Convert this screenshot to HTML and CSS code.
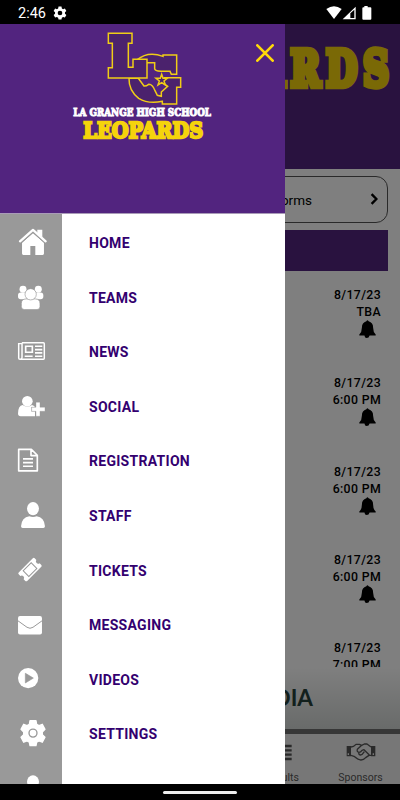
FILE: index.html
```html
<!DOCTYPE html>
<html lang="en">

<head>
    <meta charset="UTF-8">
    <meta name="viewport" content="width=device-width, initial-scale=1.0">
    <link rel="stylesheet" href="styles.css">
    <title>La Grange Leopards</title>
</head>

<body>

    <div class="status-bar">
        <span class="clock">2:46</span>
        <svg class="status-gear" viewBox="0 0 24 24"><path fill="#fff" fill-rule="evenodd" d="M9.500 1h5l.7 3.200 2.100 1.200 3.100-1 2.500 4.300-2.400 2.200v2.400l2.400 2.200-2.500 4.300-3.100-1-2.100 1.200-.7 3.200h-5l-.7-3.200-2.100-1.200-3.100 1-2.500-4.300 2.400-2.200v-2.400L1.100 8.700l2.500-4.300 3.100 1 2.100-1.200zM12 8a4 4 0 1 0 0 8 4 4 0 0 0 0-8z"/></svg>
        <svg class="status-icons" viewBox="0 0 138 42">
            <path fill="#fff" d="M1 9Q24-7 47 9L24 39z"/>
            <path fill="#fff" fill-rule="evenodd" d="M50 40L89 2V40zM73 22V36H85V11z"/>
            <path fill="#fff" d="M115 0h10v4h8q3 0 3 3v31q0 3-3 3h-21q-3 0-3-3V7q0-3 3-3h3z"/>
        </svg>
    </div>

    <div class="screen">
        <div class="app">
            <header class="banner">
                <svg viewBox="0 0 400 145">
                    <text class="slab" transform="translate(394.500 61.800) scale(.75 1)" text-anchor="end" font-size="48" letter-spacing="7.500" stroke-width="6.500">LEOPARDS</text>
                </svg>
            </header>
            <div class="forms-button">
                <span>Forms</span>
                <svg viewBox="0 0 20 30"><path d="M4 3l12 12L4 27" fill="none" stroke="#000" stroke-width="6"/></svg>
            </div>
            <div class="section-bar"></div>
            <div class="events">
                <div class="event"><span>8/17/23</span><span>TBA</span><svg class="bell" viewBox="0 0 51 56"><path d="M22 4q3-7 7 0 14 4 14 20 0 14 8 21v3H32q-2 8-9 8-6 0-7-8H0v-3q8-7 8-21 0-16 14-20z"/></svg></div>
                <div class="event"><span>8/17/23</span><span>6:00 PM</span><svg class="bell" viewBox="0 0 51 56"><path d="M22 4q3-7 7 0 14 4 14 20 0 14 8 21v3H32q-2 8-9 8-6 0-7-8H0v-3q8-7 8-21 0-16 14-20z"/></svg></div>
                <div class="event"><span>8/17/23</span><span>6:00 PM</span><svg class="bell" viewBox="0 0 51 56"><path d="M22 4q3-7 7 0 14 4 14 20 0 14 8 21v3H32q-2 8-9 8-6 0-7-8H0v-3q8-7 8-21 0-16 14-20z"/></svg></div>
                <div class="event"><span>8/17/23</span><span>6:00 PM</span><svg class="bell" viewBox="0 0 51 56"><path d="M22 4q3-7 7 0 14 4 14 20 0 14 8 21v3H32q-2 8-9 8-6 0-7-8H0v-3q8-7 8-21 0-16 14-20z"/></svg></div>
                <div class="event"><span>8/17/23</span><span>7:00 PM</span></div>
            </div>
            <div class="sponsor">MEDIA</div>
            <div class="tabs">
                <div class="tab results">
                    <svg viewBox="0 0 90 54"><path d="M20 9h54M20 22h54M20 35h54M20 48h54" stroke="#555" stroke-width="7"/></svg>
                    <span>Results</span>
                </div>
                <div class="tab">
                    <svg viewBox="0 0 90 54">
                        <path fill="#555" fill-rule="evenodd" d="M2 9h13v31H2zM5 31v5h4v-5zM75 9h13v31H75zM80 31v5h4v-5z"/>
                        <path fill="none" stroke="#555" stroke-width="4" stroke-linejoin="round" d="M15 12q8 0 15-8h10l7 3 8-4h8l12 9M15 37l9 3q15 12 21 11 8 0 14-7l10-7h6M47 7L34 19q-2 8 5 9 5 0 9-6l6-2 16 16M39 28q-2 7 4 8 6 0 12-10"/>
                    </svg>
                    <span>Sponsors</span>
                </div>
            </div>
        </div>

        <div class="scrim"></div>

        <nav class="drawer">
            <div class="drawer-header">
                <svg class="logo" viewBox="0 0 510 390">
                    <g fill="#4b226d" stroke="#f0cd16" stroke-width="4.500">
                        <path d="M232 107Q264 80 309 97V93H350V151H334L330 142H303Q284 140 284 134V116H232z"/>
                        <path d="M207 163Q206 200 236 223Q265 241 307 232V240H350V190H362V161H313L311 178L323 187L304 204V217L292 214L285 200Q277 180 266 181Q258 187 252 186L235 163z"/>
                        <path d="M145 28h71v30h-11v72h14v-24h42v56H145v-31h12V58h-12z"/>
                        <path d="M305 151l4 12h13l-10 8 4 12-11-7-11 7 4-12-10-8h13z"/>
                    </g>
                    <text class="school" x="40" y="277" font-size="31" textLength="413" lengthAdjust="spacingAndGlyphs">LA GRANGE HIGH SCHOOL</text>
                    <text class="slab" x="70" y="343" font-size="66" stroke-width="7" textLength="360" lengthAdjust="spacingAndGlyphs">LEOPARDS</text>
                </svg>
                <svg class="close" viewBox="0 0 54 54"><path d="M4 4l46 46M50 4L4 50" stroke="#ffd90a" stroke-width="8" stroke-linecap="round"/></svg>
            </div>
            <div class="menu">
                <div class="menu-item">
                    <svg class="icon" viewBox="0 0 186 164"><path fill="#fff" d="M66 80l33-29 33 29v33q0 4-4 4h-22V90H91v27H70q-4 0-4-4zM112 41h15v24l-15-12z"/><path fill="none" stroke="#999" stroke-width="3" d="M62 83l37-33 37 33"/><path fill="none" stroke="#fff" stroke-width="7" stroke-linecap="round" stroke-linejoin="round" d="M60 76l39-34 38 34"/></svg>
                    <a>HOME</a>
                </div>
                <div class="menu-item">
                    <svg class="icon" viewBox="0 0 186 164">
                        <g fill="#fff">
                            <circle cx="69" cy="55" r="10.500"/><circle cx="115" cy="55" r="10.500"/>
                            <rect x="54" y="65" width="28" height="20" rx="8"/><rect x="102" y="65" width="28" height="20" rx="8"/>
                        </g>
                        <g fill="#fff" stroke="#999" stroke-width="2"><path d="M64 107V98q0-14 14-14h28q14 0 14 14v9q0 9-9 9H73q-9 0-9-9z"/><circle cx="92" cy="70" r="17"/></g>
                    </svg>
                    <a>TEAMS</a>
                </div>
                <div class="menu-item">
                    <svg class="icon" viewBox="0 0 186 164">
                        <path fill="none" stroke="#fff" stroke-width="4.500" d="M66 53h64q3 0 3 3v44q0 3-3 3H60q-4 0-4-4V56h10v41q0 5-4 5M66 53v45"/>
                        <path fill="none" stroke="#fff" stroke-width="5" d="M77 64h20v18H77zM105 64h22M105 74h22M105 84h22M74 94h24M105 94h22"/>
                    </svg>
                    <a>NEWS</a>
                </div>
                <div class="menu-item">
                    <svg class="icon" viewBox="0 0 186 164">
                        <path fill="#fff" d="M54 101q0-24 14-26 14 9 28 0 6 1 9 6h-11v14h11v14H62q-8 0-8-8z"/>
                        <circle cx="82" cy="64" r="16" fill="#fff"/>
                        <path fill="#fff" stroke="#999" stroke-width="1" d="M108 67h12v15h15v12h-15v15h-12V94H95V82h13z"/>
                    </svg>
                    <a>SOCIAL</a>
                </div>
                <div class="menu-item">
                    <svg class="icon" viewBox="0 0 186 164"><path fill="none" stroke="#fff" stroke-width="5" stroke-linejoin="round" d="M56 46h38l18 18v47H56zM93 46v19h19M69 75h30M69 86h30M69 97h30"/></svg>
                    <a>REGISTRATION</a>
                </div>
                <div class="menu-item">
                    <svg class="icon" viewBox="0 0 186 164"><ellipse cx="99" cy="59" rx="18" ry="20" fill="#fff"/><path fill="#fff" d="M63 112q2-27 25-30 11 4 22 0 23 3 25 30 0 5-5 5H68q-5 0-5-5z"/></svg>
                    <a>STAFF</a>
                </div>
                <div class="menu-item">
                    <svg class="icon" viewBox="0 0 186 164">
                        <g transform="rotate(-45 90 80)">
                            <path fill="#fff" d="M60 62h60q4 0 4 4v7q-6 1-6 7t6 7v7q0 4-4 4H60q-4 0-4-4v-7q6-1 6-7t-6-7v-7q0-4 4-4z"/>
                            <path fill="none" stroke="#999" stroke-width="3" d="M73 68h34v24H73z"/>
                        </g>
                    </svg>
                    <a>TICKETS</a>
                </div>
                <div class="menu-item">
                    <svg class="icon" viewBox="0 0 186 164"><rect x="54" y="54" width="72" height="56" rx="6" fill="#fff"/><path d="M53 68l28 20q9 6 18 0l28-20" fill="none" stroke="#999" stroke-width="3"/></svg>
                    <a>MESSAGING</a>
                </div>
                <div class="menu-item">
                    <svg class="icon" viewBox="0 0 186 164"><circle cx="84.500" cy="78.500" r="30.500" fill="#fff"/><path d="M76 64l24 14.500L76 93z" fill="#999" stroke="#999" stroke-width="2" stroke-linejoin="round"/></svg>
                    <a>VIDEOS</a>
                </div>
                <div class="menu-item">
                    <svg class="icon" viewBox="0 0 186 164">
                        <path fill="#fff" stroke="#fff" stroke-width="4" stroke-linejoin="round" d="M90 41h18l2 11 7 4 10-4 8 15-8 8v8l8 8-8 15-10-4-7 4-2 10H90l-2-10-7-4-10 4-8-15 8-8v-8l-8-8 8-15 10 4 7-4z"/>
                        <circle cx="99" cy="78.500" r="12" fill="none" stroke="#999" stroke-width="4"/>
                    </svg>
                    <a>SETTINGS</a>
                </div>
                <div class="menu-item">
                    <svg class="icon" viewBox="0 0 186 164"><ellipse cx="99" cy="62" rx="18" ry="19" fill="#fff"/><path fill="#fff" d="M63 115q2-27 25-30 11 4 22 0 23 3 25 30z"/></svg>
                </div>
            </div>
        </nav>
    </div>

    <div class="nav-bar"><div class="pill"></div></div>

</body>

</html>
```
FILE: styles.css
```css
body {
    font-family: Roboto, sans-serif;
    margin: 0;
    width: 400px;
    height: 800px;
    overflow: hidden;
    background-color: #000;
}

svg {
    display: block;
    flex-shrink: 0;
}

.status-bar {
    display: flex;
    align-items: center;
    box-sizing: border-box;
    height: 24px;
    padding: 2px 28px 0 18px;
    color: #fff;
}

.clock {
    font-size: 14.5px;
    width: 35px;
}

.status-gear {
    width: 14px;
    height: 14px;
}

.status-icons {
    width: 46px;
    height: 14px;
    margin-left: auto;
}

.screen {
    position: relative;
    height: 760px;
    overflow: hidden;
}

.app {
    display: flex;
    flex-direction: column;
    height: 760px;
    background-color: #fff;
}

.banner {
    height: 145px;
    background-color: #52247f;
}

.slab {
    font-family: "DejaVu Serif", serif;
    font-weight: bold;
    fill: #f5d30c;
    stroke: #f5d30c;
}

.school {
    font-family: "DejaVu Serif", serif;
    font-weight: bold;
    fill: #fff;
    stroke: #fff;
    stroke-width: 3;
}

.forms-button {
    display: flex;
    align-items: center;
    justify-content: flex-end;
    box-sizing: border-box;
    height: 47px;
    margin: 7px 12px 0;
    padding-right: 9px;
    border: 1px solid #555;
    border-radius: 12px;
    font-size: 13.5px;
}

.forms-button span {
    margin-right: 58px;
}

.forms-button svg {
    width: 8px;
    height: 12px;
    margin-bottom: 1px;
}

.section-bar {
    height: 41px;
    margin: 7px 12px 0;
    background-color: #52247f;
}

.events {
    height: 396px;
    overflow: hidden;
}

.event {
    display: flex;
    flex-direction: column;
    align-items: flex-end;
    box-sizing: border-box;
    height: 88.3px;
    padding: 16px 19px 0 0;
    font-size: 12.3px;
    font-weight: 500;
    line-height: 17px;
    letter-spacing: 0.35px;
}

.bell {
    width: 17px;
    height: 18px;
    margin: -1px 5px 0 0;
}

.sponsor {
    box-sizing: border-box;
    height: 67px;
    padding: 15px 87px 0 0;
    border-bottom: 5px solid #6e6e6e;
    background: linear-gradient(#fff, #d2d6d4);
    color: #26403a;
    font-family: Lato, sans-serif;
    font-size: 22.5px;
    font-weight: bold;
    line-height: 32px;
    text-align: right;
}

.tabs {
    display: flex;
    justify-content: flex-end;
    height: 50px;
    background-color: #efefef;
    color: #555;
    font-size: 10.5px;
}

.tab {
    display: flex;
    flex-direction: column;
    align-items: center;
    width: 79px;
    padding-top: 9px;
}

.tab svg {
    width: 30px;
    height: 18px;
    margin-bottom: 10px;
}

.scrim {
    position: absolute;
    inset: 0;
    background-color: rgba(0, 0, 0, 0.5);
}

.drawer {
    position: absolute;
    top: 0;
    left: 0;
    width: 285px;
    height: 760px;
    overflow: hidden;
    background: linear-gradient(to right, #999 62px, #fff 62px);
}

.drawer-header {
    display: flex;
    justify-content: space-between;
    box-sizing: border-box;
    height: 190px;
    padding: 0 11px 0 60px;
    border-bottom: 1px solid #a99bb8;
    background-color: #52247f;
}

.logo {
    width: 170px;
    height: 130px;
}

.close {
    width: 18px;
    height: 18px;
    margin-top: 20px;
}

.menu {
    padding-top: 2px;
}

.menu-item {
    display: flex;
    align-items: center;
    height: 54.56px;
}

.menu-item a {
    margin-left: 27px;
    color: #33006f;
    font-size: 14px;
    font-weight: bold;
    letter-spacing: 0.28px;
}

.icon {
    width: 62px;
    height: 54.56px;
}

.nav-bar {
    display: flex;
    align-items: center;
    justify-content: center;
    height: 16px;
}

.pill {
    width: 74px;
    height: 3px;
    border-radius: 2px;
    background-color: #eee;
}
```
